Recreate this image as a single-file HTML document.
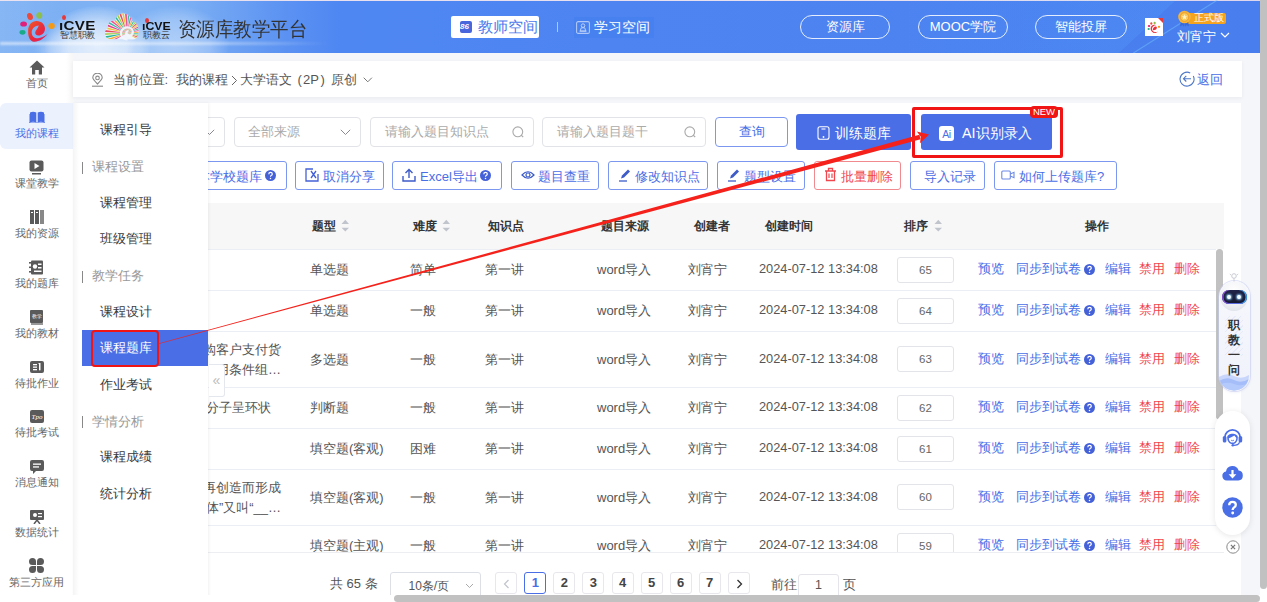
<!DOCTYPE html>
<html><head><meta charset="utf-8">
<style>
*{box-sizing:border-box;margin:0;padding:0}
html,body{width:1267px;height:602px;overflow:hidden;background:#f4f6fa;font-family:"Liberation Sans",sans-serif;color:#333}
.a{position:absolute}
.t{position:absolute;white-space:nowrap;line-height:1}
#hdr{left:0;top:0;width:1260px;height:53px;background:linear-gradient(90deg,#7aaef3 0px,#80b3f4 140px,#7aaef4 190px,#6a9ff3 240px,#5a91f2 290px,#4f87f2 340px,#4d84f2 600px,#4b82f0 1260px);overflow:hidden}
.mi{position:absolute;left:0;width:135px;height:36px;font-size:13px;color:#3a3a3a;line-height:36px;padding-left:27px}
.mg{position:absolute;left:0;width:135px;height:36px;font-size:13px;color:#999;line-height:37px;padding-left:19px}
.mg:before{content:"";position:absolute;left:9px;top:13.5px;width:1.3px;height:12px;background:#888}
.inp{position:absolute;height:30px;border:1px solid #e2e3e8;border-radius:4px;background:#fff;font-size:13px;color:#aaa;line-height:28px}
.btn{position:absolute;height:29px;border:1px solid #7b97f0;border-radius:3px;background:#fff}
.th{position:absolute;font-size:12px;font-weight:bold;color:#333;line-height:1;white-space:nowrap}
.td{position:absolute;font-size:13px;color:#555;line-height:1;white-space:nowrap}
.sinp{position:absolute;width:57px;height:26px;border:1px solid #e2e4ea;border-radius:3px;font-size:11.5px;color:#666;text-align:center;line-height:24px}
.op{position:absolute;font-size:12.85px;line-height:1;white-space:nowrap}
.bl{color:#4a6ee6}.rd{color:#f0474f}
.pg{position:absolute;top:572px;border:1px solid #dcdfe6;border-radius:3px;font-size:13px;font-weight:bold;color:#333;text-align:center}
</style></head><body>
<div id="hdr" class="a">
<div class="a" style="left:0;top:0;width:1260px;height:1px;background:#e9e0ef"></div>
<div class="a" style="left:45px;top:6px;width:105px;height:80px;border-radius:50%;background:radial-gradient(ellipse at center,rgba(255,255,255,.7) 0,rgba(255,255,255,.55) 40%,rgba(255,255,255,.2) 62%,rgba(255,255,255,0) 72%)"></div>
<div class="a" style="left:120px;top:5px;width:110px;height:80px;border-radius:50%;background:radial-gradient(ellipse at center,rgba(255,255,255,.4) 0,rgba(255,255,255,.25) 45%,rgba(255,255,255,0) 70%)"></div><div class="a" style="left:40px;top:30px;width:90px;height:40px;border-radius:50%;background:rgba(255,255,255,.25);filter:blur(4px)"></div>
<div class="a" style="left:0;top:0;width:60px;height:53px;background:linear-gradient(90deg,rgba(255,255,255,.1),rgba(255,255,255,0))"></div>
<div class="a" style="left:0;top:42px;width:330px;height:3px;background:linear-gradient(90deg,rgba(255,255,255,.55),rgba(255,255,255,.45) 60%,rgba(255,255,255,0));filter:blur(1px)"></div>
<div class="a" style="left:900px;top:0;width:360px;height:53px;background:linear-gradient(90deg,rgba(80,170,255,0),rgba(80,170,255,.12) 70%,rgba(80,170,255,.18));clip-path:polygon(0 0,276px 0,219px 53px,0 53px)"></div><div class="a" style="left:1119px;top:0;width:141px;height:53px;background:rgba(40,70,200,.06);clip-path:polygon(57.5px 0,141px 0,141px 53px,0 53px)"></div><svg class="a" style="left:1119px;top:0" width="141" height="53"><path d="M14.4 53 L98.5 0" stroke="rgba(120,200,255,.45)" stroke-width="1.2"/></svg>
<svg class="a" style="left:15px;top:8px" width="45" height="40" viewBox="0 0 45 40">
<ellipse cx="15" cy="8.5" rx="2.8" ry="3.6" fill="#ee4a3a" transform="rotate(-20 15 8.5)"/>
<ellipse cx="24.3" cy="7.5" rx="3" ry="3.2" fill="#8cc04a"/>
<ellipse cx="8.6" cy="16" rx="3.4" ry="2.6" fill="#e0207a"/>
<ellipse cx="7.5" cy="24.3" rx="3" ry="2.4" fill="#1aaa8a"/>
<ellipse cx="36.6" cy="18" rx="3.2" ry="3" fill="#f59a14"/>
<defs><linearGradient id="eg" x1="0" y1="0" x2="1" y2="1"><stop offset="0" stop-color="#f25a22"/><stop offset=".55" stop-color="#e8283f"/><stop offset="1" stop-color="#e01a6a"/></linearGradient></defs>
<path d="M32.6 26.1 C29 30.5, 24 34, 19 33.8 C15 33.5, 13 29, 13.1 23 C13.2 16.5, 17 12.9, 21.5 12.9 C26.5 12.9, 30 16.5, 30 20.5 C30 25, 26.5 27.6, 23.5 27.6 C21 27.6, 20 26, 20.2 24.5 C20.5 22, 23 20.5, 23.8 17.5 C20 17.5, 16.7 20.5, 16.7 24.5 C16.7 28.5, 19.5 30.5, 23 30.3 C26 30, 29 28.5, 32.6 26.1 Z" fill="url(#eg)"/>
</svg>
<div class="a" style="left:62px;top:15px;width:4px;height:5px;border-radius:50%;background:#e8393a"></div>
<div class="t" style="left:59px;top:19px;font-size:13.5px;font-weight:bold;color:#111;letter-spacing:.3px;transform:scaleX(1.12);transform-origin:left">ıCVE</div>
<div class="t" style="left:60px;top:31px;font-size:9px;color:#333;letter-spacing:-.2px">智慧职教</div>
<svg class="a" style="left:104px;top:13px" width="35" height="27" viewBox="0 0 35 27"><defs><clipPath id="cc"><path d="M4 26 C 0 23, 0 17, 4 15 C 3 10, 7 7, 11 8 C 12 3, 16 0.4, 19.5 0.5 C 23 0.6, 27 3.5, 28 8 C 32 9, 35 13, 34.5 18 C 35 22, 33 26.5, 29 26.5 Z"/></clipPath></defs><g clip-path="url(#cc)"><rect x="0" y="0" width="35" height="27" fill="#f0f4fb"/><path d="M23,20 L-11.6,40.0 L-13.3,36.9 Z" fill="#ee4f8a"/><path d="M23,20 L-14.1,34.9 L-15.3,31.5 Z" fill="#f7ad2e"/><path d="M23,20 L-15.9,29.5 L-16.5,26.0 Z" fill="#27b59c"/><path d="M23,20 L-16.8,23.8 L-17.0,20.3 Z" fill="#a5cd45"/><path d="M23,20 L-17.0,18.1 L-16.6,14.6 Z" fill="#ea4b5d"/><path d="M23,20 L-16.3,12.5 L-15.5,9.0 Z" fill="#f2c230"/><path d="M23,20 L-14.8,7.0 L-13.5,3.7 Z" fill="#e0408a"/><path d="M23,20 L-12.6,1.7 L-10.8,-1.3 Z" fill="#3db8a8"/><path d="M23,20 L-9.6,-3.1 L-7.5,-5.9 Z" fill="#ee4f8a"/><path d="M23,20 L-6.0,-7.5 L-3.5,-10.0 Z" fill="#f7ad2e"/><path d="M23,20 L-1.8,-11.4 L1.1,-13.4 Z" fill="#27b59c"/><path d="M23,20 L2.9,-14.6 L6.0,-16.2 Z" fill="#a5cd45"/><path d="M23,20 L8.0,-17.1 L11.3,-18.3 Z" fill="#ea4b5d"/><path d="M23,20 L13.4,-18.8 L16.9,-19.5 Z" fill="#f2c230"/><path d="M23,20 L19.1,-19.8 L22.6,-20.0 Z" fill="#e0408a"/><path d="M23,20 L24.7,-20.0 L28.3,-19.7 Z" fill="#3db8a8"/><path d="M23,20 L30.4,-19.3 L33.8,-18.5 Z" fill="#ee4f8a"/><path d="M23,20 L35.9,-17.9 L39.2,-16.6 Z" fill="#f7ad2e"/><path d="M23,20 L41.2,-15.6 L44.2,-13.9 Z" fill="#27b59c"/><path d="M23,20 L46.0,-12.7 L48.8,-10.5 Z" fill="#a5cd45"/><path d="M23,20 L50.4,-9.1 L52.9,-6.6 Z" fill="#ea4b5d"/><path d="M23,20 L54.3,-4.9 L56.4,-2.0 Z" fill="#f2c230"/><path d="M23,20 L57.5,-0.2 L59.2,2.9 Z" fill="#e0408a"/><path d="M23,20 L60.0,4.9 L61.2,8.2 Z" fill="#3db8a8"/><path d="M23,20 L61.8,10.3 L62.5,13.8 Z" fill="#ee4f8a"/><path d="M23,20 L62.8,15.9 L63.0,19.5 Z" fill="#f7ad2e"/><path d="M23,20 L63.0,21.6 L62.7,25.1 Z" fill="#27b59c"/><path d="M23,20 L62.3,27.3 L61.5,30.7 Z" fill="#a5cd45"/><path d="M23,20 L60.9,32.8 L59.6,36.1 Z" fill="#ea4b5d"/><path d="M23,20 L58.7,38.1 L57.0,41.1 Z" fill="#f2c230"/></g></svg>
<svg class="a" style="left:118px;top:25px" width="20" height="16" viewBox="0 0 20 16"><path d="M9.5 14.5 C5 14.5, 2.5 11, 3 7.5 C3.5 4, 7 2, 10.5 2.5 C14 3, 15.5 6, 14.5 8.5 C13.5 11, 10 11.5, 8.5 9.5 C7.5 8, 8.5 6, 10.5 6.2" stroke="rgba(240,246,255,.95)" stroke-width="2.2" fill="none"/></svg>
<div class="a" style="left:145px;top:18px;width:4px;height:5px;border-radius:50%;background:#e8393a"></div>
<div class="t" style="left:142px;top:21px;font-size:11px;font-weight:bold;color:#111;transform:scaleX(1.12);transform-origin:left">ıCVE</div>
<div class="t" style="left:143px;top:31px;font-size:9px;color:#333">职教云</div>
<div class="t" style="left:177.5px;top:19.5px;font-size:18.2px;letter-spacing:.5px;color:#333;transform:scaleY(1.08);transform-origin:top">资源库教学平台</div>
<div class="a" style="left:451px;top:16px;width:88px;height:22px;background:#fff;border-radius:2px"></div>
<div class="a" style="left:459.5px;top:20.8px;width:12px;height:12px;background:#4a66dc;border-radius:2px"></div>
<div class="t" style="left:460px;top:23px;font-size:8px;color:#fff;font-style:italic;font-weight:bold">86</div>
<div class="t" style="left:477.5px;top:19.5px;font-size:14.5px;color:#4b78ec">教师空间</div>
<div class="a" style="left:557px;top:22px;width:1px;height:10px;background:rgba(255,255,255,.55)"></div>
<svg class="a" style="left:576px;top:20.5px" width="14" height="13" viewBox="0 0 14 13"><rect x="0.6" y="0.6" width="12.8" height="11.8" rx="1.5" stroke="rgba(255,255,255,.9)" stroke-width="1.1" fill="none"/><circle cx="7" cy="4.6" r="1.8" stroke="#fff" stroke-width="1" fill="none"/><path d="M4.2 10 L5.3 6.8 H8.7 L9.8 10 Z" stroke="#fff" stroke-width="1" fill="none"/><path d="M3.5 10.2 H10.5" stroke="#fff" stroke-width="1"/></svg>
<div class="a" style="left:574px;top:17px;width:80px;height:21px;background:rgba(60,120,235,.35)"></div><div class="t" style="left:593.5px;top:19.5px;font-size:14.2px;color:#fff;font-weight:500">学习空间</div>
<div class="a" style="left:800px;top:15px;width:90px;height:24px;border:1px solid rgba(255,255,255,.85);border-radius:12px;color:#fff;font-size:13px;text-align:center;line-height:22px">资源库</div>
<div class="a" style="left:918px;top:15px;width:90px;height:24px;border:1px solid rgba(255,255,255,.85);border-radius:12px;color:#fff;font-size:13px;text-align:center;line-height:22px">MOOC学院</div>
<div class="a" style="left:1035px;top:15px;width:92px;height:24px;border:1px solid rgba(255,255,255,.85);border-radius:12px;color:#fff;font-size:13px;text-align:center;line-height:22px">智能投屏</div>
<div class="a" style="left:1145px;top:18px;width:18px;height:18px;background:#fff"></div>
<div class="a" style="left:1158px;top:18px;width:5px;height:5px;background:#e8393a;clip-path:polygon(0 0,100% 0,100% 100%)"></div>
<svg class="a" style="left:1146px;top:20px" width="16" height="15" viewBox="0 0 45 40"><ellipse cx="15" cy="8.5" rx="3" ry="3.6" fill="#ee4a3a"/><ellipse cx="24.3" cy="7.5" rx="3.2" ry="3.4" fill="#8cc04a"/><ellipse cx="8.6" cy="16" rx="3.6" ry="2.8" fill="#e0207a"/><ellipse cx="7.5" cy="24.3" rx="3.2" ry="2.6" fill="#1aaa8a"/><ellipse cx="36.6" cy="18" rx="3.4" ry="3.2" fill="#f59a14"/><path d="M28 13.5 C22 10.5, 13 14, 13 23 C13 31, 20 36, 26 35.5 C29 35.3, 31 34, 33.5 31.5 C30 33, 27 33.2, 24 32.5 C19 31, 16.5 27, 17 22.5 C17.5 17, 22 14, 28 13.5 Z" fill="#e8303c"/><path d="M19 27.5 C19.5 20, 25 16, 28.5 17.5 C32 19, 31 24.5, 27 26 C24.5 27, 22 27, 19 27.5 Z" fill="#e8303c"/></svg>
<div class="a" style="left:1187px;top:12.5px;width:39px;height:11px;background:#f6a31e;border-radius:0 2px 2px 0"></div>
<svg class="a" style="left:1177px;top:10px" width="15" height="17" viewBox="0 0 15 17"><path d="M4 11 L3 16.5 L5.5 15 L7 16.8 L7.5 12 Z M11 11 L12 16.5 L9.5 15 L8 16.8 L7.5 12 Z" fill="#3a6ad8"/><circle cx="7.5" cy="7" r="6.3" fill="#f7b53a"/><circle cx="7.5" cy="7" r="4.3" fill="#f9c95a" stroke="#e9952a" stroke-width=".8"/><path d="M7.5 4.3 L8.3 6.3 L10.3 6.4 L8.8 7.6 L9.3 9.6 L7.5 8.5 L5.7 9.6 L6.2 7.6 L4.7 6.4 L6.7 6.3 Z" fill="#fff3c8"/></svg>
<div class="t" style="left:1193.5px;top:13px;font-size:10px;color:#fff">正式版</div>
<div class="t" style="left:1176.5px;top:29.5px;font-size:13px;color:#fff">刘宵宁</div>
<svg class="a" style="left:1220px;top:32px" width="10" height="7"><path d="M1 1 L5 5 L9 1" stroke="#fff" stroke-width="1.2" fill="none"/></svg>
</div>
<div class="a" style="left:0;top:53px;width:73px;height:549px;background:#fff"></div>
<div class="a" style="left:0;top:103px;width:73px;height:46px;background:#ebf1fd;border-radius:6px 0 0 6px"></div>
<svg class="a" style="left:29px;top:60px" width="16" height="15" viewBox="0 0 16 15"><path d="M8 0.5 L15.5 7.5 L13 7.5 L13 14.5 L9.8 14.5 L9.8 10 L6.2 10 L6.2 14.5 L3 14.5 L3 7.5 L0.5 7.5 Z" fill="#5a5a5a"/></svg>
<div class="t" style="left:0;width:73px;text-align:center;top:78.4px;font-size:11px;color:#666">首页</div>
<svg class="a" style="left:29px;top:111px" width="16" height="12" viewBox="0 0 16 12"><path d="M1 1.5 Q4 0 7.3 1.5 L7.3 11.5 Q4 10 1 11.5 Z M8.7 1.5 Q12 0 15 1.5 L15 11.5 Q12 10 8.7 11.5 Z" fill="#4a6ee6"/><path d="M0 3 L0 12 L16 12 L16 3" stroke="#4a6ee6" stroke-width="1" fill="none"/></svg>
<div class="t" style="left:0;width:73px;text-align:center;top:128.2px;font-size:11px;color:#4a6ee6">我的课程</div>
<svg class="a" style="left:29px;top:160px" width="15" height="15" viewBox="0 0 15 15"><rect x="0.5" y="0.5" width="14" height="11" rx="2" fill="#5a5a5a"/><path d="M5.5 3 L10.5 6 L5.5 9 Z" fill="#fff"/><rect x="3" y="13" width="9" height="1.5" fill="#5a5a5a"/></svg>
<div class="t" style="left:0;width:73px;text-align:center;top:178.1px;font-size:11px;color:#666">课堂教学</div>
<svg class="a" style="left:30px;top:210px" width="14" height="14" viewBox="0 0 14 14"><rect x="0" y="0" width="4" height="14" fill="#5a5a5a"/><rect x="5" y="0" width="4" height="14" fill="#5a5a5a"/><rect x="10" y="0" width="4" height="14" fill="#888"/><rect x="1" y="2" width="2" height="1" fill="#fff"/><rect x="6" y="2" width="2" height="1" fill="#fff"/></svg>
<div class="t" style="left:0;width:73px;text-align:center;top:228.0px;font-size:11px;color:#666">我的资源</div>
<svg class="a" style="left:29px;top:260px" width="15" height="15" viewBox="0 0 15 15"><rect x="2" y="0.5" width="12" height="14" rx="1" fill="#5a5a5a"/><rect x="0" y="2" width="4" height="1.6" fill="#5a5a5a"/><rect x="0" y="6.5" width="4" height="1.6" fill="#5a5a5a"/><rect x="0" y="11" width="4" height="1.6" fill="#5a5a5a"/><circle cx="6" cy="6.5" r="2.2" fill="#fff"/><rect x="9" y="3.5" width="3.5" height="1.5" fill="#fff"/><rect x="9" y="7" width="3.5" height="1.5" fill="#fff"/><rect x="5" y="10.5" width="7.5" height="1.5" fill="#fff"/></svg>
<div class="t" style="left:0;width:73px;text-align:center;top:277.8px;font-size:11px;color:#666">我的题库</div>
<svg class="a" style="left:30px;top:310px" width="14" height="15" viewBox="0 0 14 15"><rect x="0" y="0" width="13" height="13" rx="1" fill="#5a5a5a"/><rect x="1" y="13" width="12" height="2" fill="#999"/><text x="6.5" y="7.5" font-size="5" fill="#fff" text-anchor="middle" font-family="Liberation Sans">教学</text></svg>
<div class="t" style="left:0;width:73px;text-align:center;top:327.6px;font-size:11px;color:#666">我的教材</div>
<svg class="a" style="left:30px;top:361px" width="14" height="12" viewBox="0 0 14 12"><rect x="0" y="0" width="14" height="12" rx="2" fill="#5a5a5a"/><rect x="3" y="3" width="4" height="1.3" fill="#fff"/><rect x="3" y="5.5" width="4" height="1.3" fill="#fff"/><rect x="3" y="8" width="4" height="1.3" fill="#fff"/><rect x="9" y="3" width="1.5" height="6.3" fill="#fff"/><rect x="8.5" y="2" width="2" height="1" fill="#fff"/></svg>
<div class="t" style="left:0;width:73px;text-align:center;top:377.5px;font-size:11px;color:#666">待批作业</div>
<svg class="a" style="left:30px;top:410px" width="14" height="13" viewBox="0 0 14 13"><rect x="0" y="0" width="14" height="13" rx="2" fill="#5a5a5a"/><text x="7" y="9" font-size="7" fill="#fff" text-anchor="middle" font-style="italic" font-family="Liberation Serif">Tpo</text></svg>
<div class="t" style="left:0;width:73px;text-align:center;top:427.4px;font-size:11px;color:#666">待批考试</div>
<svg class="a" style="left:30px;top:460px" width="14" height="14" viewBox="0 0 14 14"><path d="M2 0 H12 Q14 0 14 2 V9 Q14 11 12 11 H6 L3 14 L3 11 H2 Q0 11 0 9 V2 Q0 0 2 0 Z" fill="#5a5a5a"/><rect x="3" y="3.5" width="8" height="1.3" fill="#fff"/><rect x="3" y="6.3" width="6" height="1.3" fill="#fff"/></svg>
<div class="t" style="left:0;width:73px;text-align:center;top:477.2px;font-size:11px;color:#666">消息通知</div>
<svg class="a" style="left:30px;top:510px" width="14" height="14" viewBox="0 0 14 14"><rect x="0" y="0" width="14" height="10" rx="1" fill="#5a5a5a"/><circle cx="5" cy="5" r="2" fill="#fff"/><rect x="8" y="3" width="4" height="1.2" fill="#fff"/><rect x="8" y="6" width="4" height="1.2" fill="#fff"/><path d="M4 14 L7 10 L10 14" stroke="#5a5a5a" stroke-width="1.5" fill="none"/></svg>
<div class="t" style="left:0;width:73px;text-align:center;top:527.1px;font-size:11px;color:#666">数据统计</div>
<svg class="a" style="left:29px;top:558px" width="15" height="15" viewBox="0 0 15 15"><path d="M7 7 H3.5 A3.5 3.5 0 1 1 7 3.5 Z M8 7 V3.5 A3.5 3.5 0 1 1 11.5 7 Z M7 8 V11.5 A3.5 3.5 0 1 1 3.5 8 Z M8 8 H11.5 A3.5 3.5 0 1 1 8 11.5 Z" fill="#5a5a5a"/></svg>
<div class="t" style="left:0;width:73px;text-align:center;top:576.9px;font-size:11px;color:#666">第三方应用</div>
<div class="a" style="left:73px;top:61px;width:1169px;height:36px;background:#fff;box-shadow:0 1px 4px rgba(0,0,20,.05)"></div>
<svg class="a" style="left:91px;top:73px" width="13" height="14" viewBox="0 0 13 14"><path d="M6.5 11 C3.5 8, 1.8 6.2, 1.8 4.8 A4.7 4.7 0 0 1 11.2 4.8 C11.2 6.2, 9.5 8, 6.5 11 Z" stroke="#888" stroke-width="1.1" fill="none"/><circle cx="6.5" cy="4.9" r="1.8" stroke="#888" stroke-width="1.1" fill="none"/><path d="M1 13.2 H12" stroke="#888" stroke-width="1.1"/></svg>
<div class="t" style="left:112.5px;top:73px;font-size:13px;color:#555">当前位置</div>
<div class="t" style="left:164.5px;top:73px;font-size:13px;color:#555">:</div>
<div class="t" style="left:175.7px;top:73px;font-size:13px;color:#555">我的课程</div>
<svg class="a" style="left:230.5px;top:74.5px" width="7" height="11"><path d="M1 1 L5.5 5.5 L1 10" stroke="#666" stroke-width="1" fill="none"/></svg>
<div class="t" style="left:239.7px;top:73px;font-size:13px;color:#555">大学语文</div>
<div class="t" style="left:297.5px;top:73px;font-size:13px;color:#555">(</div>
<div class="t" style="left:303px;top:73px;font-size:13px;color:#555">2P</div>
<div class="t" style="left:320.5px;top:73px;font-size:13px;color:#555">)</div>
<div class="t" style="left:331.4px;top:73px;font-size:13px;color:#555">原创</div>
<svg class="a" style="left:363px;top:76.5px" width="10" height="6"><path d="M0.7 0.7 L4.8 4.8 L8.9 0.7" stroke="#777" stroke-width="1" fill="none"/></svg>
<svg class="a" style="left:1178.5px;top:70.5px" width="16" height="16" viewBox="0 0 16 16"><path d="M11.2 1.9 A7 7 0 1 0 14.3 5" stroke="#4d78c8" stroke-width="1.1" fill="none"/><path d="M12 7.7 H4.5 M7.3 4.9 L4.5 7.7 L7.3 10.5" stroke="#4d78c8" stroke-width="1.1" fill="none"/></svg>
<div class="t" style="left:1197px;top:73px;font-size:13px;color:#4a6ee6">返回</div>
<div class="a" style="left:73px;top:103px;width:1168px;height:499px;background:#fff"></div>
<div class="inp" style="left:150px;top:117px;width:75px"></div>
<svg class="a" style="left:204px;top:128.5px" width="11" height="7"><path d="M0.8 0.8 L5.5 5.5 L10.2 0.8" stroke="#8a8a92" stroke-width="1" fill="none"/></svg>
<div class="inp" style="left:234px;top:117px;width:127px;padding-left:13px;color:#aaa">全部来源</div>
<svg class="a" style="left:340px;top:128.5px" width="11" height="7"><path d="M0.8 0.8 L5.5 5.5 L10.2 0.8" stroke="#8a8a92" stroke-width="1" fill="none"/></svg>
<div class="inp" style="left:370px;top:117px;width:164px;padding-left:14px;color:#aaa">请输入题目知识点</div>
<svg class="a" style="left:511.5px;top:125.5px" width="13" height="13" viewBox="0 0 13 13"><circle cx="5.8" cy="5.8" r="4.9" stroke="#aaa" stroke-width="1.1" fill="none"/><path d="M9.2 9.2 L11.2 11.2" stroke="#aaa" stroke-width="1.2"/></svg>
<div class="inp" style="left:542px;top:117px;width:164px;padding-left:14px;color:#aaa">请输入题目题干</div>
<svg class="a" style="left:683.5px;top:125.5px" width="13" height="13" viewBox="0 0 13 13"><circle cx="5.8" cy="5.8" r="4.9" stroke="#aaa" stroke-width="1.1" fill="none"/><path d="M9.2 9.2 L11.2 11.2" stroke="#aaa" stroke-width="1.2"/></svg>
<div class="btn" style="left:715px;top:117px;width:73px;height:30px;border-radius:4px"></div>
<div class="t" style="left:739px;top:125px;font-size:13px;color:#4a6ee6">查询</div>
<div class="a" style="left:796px;top:114px;width:115px;height:36px;background:#4a6ee6;border-radius:3px"></div>
<svg class="a" style="left:816.5px;top:125.5px" width="13" height="14" viewBox="0 0 13 14"><rect x="1" y="0.8" width="11" height="12.4" rx="2" stroke="#fff" stroke-width="1.1" fill="none"/><path d="M4.5 3 H8.5" stroke="#fff" stroke-width="1.1"/><circle cx="6.5" cy="11" r=".9" fill="#fff"/></svg>
<div class="t" style="left:835px;top:126px;font-size:14.4px;color:#fff">训练题库</div>
<div class="a" style="left:921px;top:114px;width:131px;height:36px;background:#4a6ee6;border-radius:3px"></div>
<div class="a" style="left:939px;top:126px;width:15px;height:15px;background:#fff;border-radius:3px;color:#4a6ee6;font-size:10.5px;line-height:16px;text-align:center;letter-spacing:-.3px">Ai</div>
<div class="t" style="left:962px;top:126px;font-size:14.3px;color:#fff">AI识别录入</div>
<div class="a" style="left:912px;top:107px;width:151px;height:51px;border:3px solid #f01414;border-radius:2px"></div>
<div class="a" style="left:1030px;top:106px;width:28px;height:12px;background:#f01414;border-radius:4px;color:#fff;font-size:9.5px;line-height:12px;text-align:center">NEW</div>
<div class="btn" style="left:150px;top:161px;width:137px;"></div>
<div class="btn" style="left:295px;top:161px;width:89px;"></div>
<div class="btn" style="left:392px;top:161px;width:110px;"></div>
<div class="btn" style="left:511px;top:161px;width:88px;"></div>
<div class="btn" style="left:608px;top:161px;width:100px;"></div>
<div class="btn" style="left:717px;top:161px;width:88px;"></div>
<div class="btn" style="left:814px;top:161px;width:87px;border-color:#f08a8f;"></div>
<div class="btn" style="left:910px;top:161px;width:75px;"></div>
<div class="btn" style="left:994px;top:161px;width:123px;"></div>
<div class="t" style="left:196.5px;top:169.5px;font-size:13px;color:#4a6ee6">本学校题库</div>
<svg class="a" style="left:264.5px;top:170px" width="11" height="11" viewBox="0 0 11 11"><circle cx="5.5" cy="5.5" r="5.5" fill="#4561d8"/><path d="M3.8 4.2 Q3.8 2.4 5.5 2.4 Q7.3 2.4 7.3 4 Q7.3 5 6.2 5.5 Q5.5 5.9 5.5 6.8" stroke="#fff" stroke-width="1.2" fill="none"/><circle cx="5.5" cy="8.4" r=".75" fill="#fff"/></svg>
<svg class="a" style="left:305px;top:168px" width="14" height="14" viewBox="0 0 14 14"><path d="M8 1 H1 V13 H13 V6" stroke="#4561d8" stroke-width="1.3" fill="none"/><path d="M6 3 L11 10 M11 3 L6 10" stroke="#4561d8" stroke-width="1.3"/></svg>
<div class="t" style="left:323px;top:169.5px;font-size:13px;color:#4a6ee6">取消分享</div>
<svg class="a" style="left:402px;top:168px" width="14" height="14" viewBox="0 0 14 14"><path d="M7 10 V1.5 M3.5 5 L7 1.5 L10.5 5" stroke="#3d5bc9" stroke-width="1.4" fill="none"/><path d="M1 8 V13 H13 V8" stroke="#3d5bc9" stroke-width="1.4" fill="none"/></svg>
<div class="t" style="left:420px;top:169.5px;font-size:13px;color:#4a6ee6">Excel导出</div>
<svg class="a" style="left:480px;top:170px" width="11" height="11" viewBox="0 0 11 11"><circle cx="5.5" cy="5.5" r="5.5" fill="#4561d8"/><path d="M3.8 4.2 Q3.8 2.4 5.5 2.4 Q7.3 2.4 7.3 4 Q7.3 5 6.2 5.5 Q5.5 5.9 5.5 6.8" stroke="#fff" stroke-width="1.2" fill="none"/><circle cx="5.5" cy="8.4" r=".75" fill="#fff"/></svg>
<svg class="a" style="left:521px;top:170px" width="14" height="10" viewBox="0 0 14 10"><path d="M1 5 Q7 -1.5 13 5 Q7 11.5 1 5 Z" stroke="#3d5bc9" stroke-width="1.2" fill="none"/><circle cx="7" cy="5" r="2" stroke="#3d5bc9" stroke-width="1.2" fill="none"/></svg>
<div class="t" style="left:538px;top:169.5px;font-size:13px;color:#4a6ee6">题目查重</div>
<svg class="a" style="left:617.5px;top:168px" width="13" height="14" viewBox="0 0 13 14"><path d="M3 10.5 L4 7.5 L10 1.5 L12 3.5 L6 9.5 Z" fill="#3d5bc9"/><path d="M1 13 H9" stroke="#3d5bc9" stroke-width="1.3"/></svg>
<div class="t" style="left:635px;top:169.5px;font-size:13px;color:#4a6ee6">修改知识点</div>
<svg class="a" style="left:726.5px;top:168px" width="13" height="14" viewBox="0 0 13 14"><path d="M3 10.5 L4 7.5 L10 1.5 L12 3.5 L6 9.5 Z" fill="#3d5bc9"/><path d="M1 13 H9" stroke="#3d5bc9" stroke-width="1.3"/></svg>
<div class="t" style="left:744px;top:169.5px;font-size:13px;color:#4a6ee6">题型设置</div>
<svg class="a" style="left:824px;top:167px" width="13" height="15" viewBox="0 0 13 15"><path d="M1 4 H12 M4.5 4 V1.5 H8.5 V4" stroke="#f0474f" stroke-width="1.3" fill="none"/><path d="M2.5 4 V13.5 H10.5 V4" stroke="#f0474f" stroke-width="1.3" fill="none"/><path d="M5 6.5 V11 M8 6.5 V11" stroke="#f0474f" stroke-width="1.2"/></svg>
<div class="t" style="left:840.5px;top:169.5px;font-size:13px;color:#f0474f">批量删除</div>
<div class="t" style="left:924px;top:169.5px;font-size:13px;color:#4a6ee6">导入记录</div>
<svg class="a" style="left:1001px;top:170px" width="14" height="10" viewBox="0 0 14 10"><rect x="0.8" y="1" width="8.5" height="8" rx="1" stroke="#6d8ae8" stroke-width="1.1" fill="none"/><path d="M9.3 4 L13 2.3 V7.7 L9.3 6" stroke="#6d8ae8" stroke-width="1.1" fill="none"/></svg>
<div class="t" style="left:1019px;top:169.5px;font-size:13px;color:#4a6ee6">如何上传题库?</div>
<div class="a" style="left:150px;top:203px;width:1074px;height:46px;background:#f7f7f8"></div>
<div class="a" style="left:150px;top:249px;width:1074px;height:1px;background:#ebeef5"></div>
<div class="th" style="left:312px;top:220px">题型</div>
<svg class="a" style="left:341px;top:219px" width="9" height="13" viewBox="0 0 9 13"><path d="M0.5 5 L4.3 0.8 L8 5 Z" fill="#c0c4cc"/><path d="M0.5 8.7 L4.3 12.6 L8 8.7 Z" fill="#c0c4cc"/></svg>
<div class="th" style="left:413px;top:220px">难度</div>
<svg class="a" style="left:442px;top:219px" width="9" height="13" viewBox="0 0 9 13"><path d="M0.5 5 L4.3 0.8 L8 5 Z" fill="#c0c4cc"/><path d="M0.5 8.7 L4.3 12.6 L8 8.7 Z" fill="#c0c4cc"/></svg>
<div class="th" style="left:488px;top:220px">知识点</div>
<div class="th" style="left:601px;top:220px">题目来源</div>
<div class="th" style="left:694px;top:220px">创建者</div>
<div class="th" style="left:765px;top:220px">创建时间</div>
<div class="th" style="left:904px;top:220px">排序</div>
<svg class="a" style="left:933.5px;top:219px" width="9" height="13" viewBox="0 0 9 13"><path d="M0.5 5 L4.3 0.8 L8 5 Z" fill="#c0c4cc"/><path d="M0.5 8.7 L4.3 12.6 L8 8.7 Z" fill="#c0c4cc"/></svg>
<div class="th" style="left:1085px;top:220px">操作</div>
<div class="a" style="left:150px;top:249px;width:1074px;height:303px;overflow:hidden">
<div class="a" style="left:0;top:41px;width:1066px;height:1px;background:#ebeef5"></div>
<div class="td" style="left:160px;top:14.0px;color:#555">单选题</div>
<div class="td" style="left:260px;top:14.0px;color:#555">简单</div>
<div class="td" style="left:335px;top:14.0px;color:#555">第一讲</div>
<div class="td" style="left:447px;top:14.0px;color:#555">word导入</div>
<div class="td" style="left:538px;top:14.0px;color:#555">刘宵宁</div>
<div class="td" style="left:609px;top:14.0px;font-size:12.8px">2024-07-12 13:34:08</div>
<div class="sinp" style="left:747px;top:7.5px">65</div>
<div class="op bl" style="left:828px;top:14.0px">预览</div>
<div class="op bl" style="left:866px;top:14.0px">同步到试卷</div>
<svg class="a" style="left:934px;top:15.0px" width="11" height="11" viewBox="0 0 11 11"><circle cx="5.5" cy="5.5" r="5.5" fill="#4561d8"/><path d="M3.8 4.2 Q3.8 2.4 5.5 2.4 Q7.3 2.4 7.3 4 Q7.3 5 6.2 5.5 Q5.5 5.9 5.5 6.8" stroke="#fff" stroke-width="1.2" fill="none"/><circle cx="5.5" cy="8.4" r=".75" fill="#fff"/></svg>
<div class="op bl" style="left:955px;top:14.0px">编辑</div>
<div class="op rd" style="left:989px;top:14.0px">禁用</div>
<div class="op rd" style="left:1024px;top:14.0px">删除</div>
<div class="a" style="left:0;top:82px;width:1066px;height:1px;background:#ebeef5"></div>
<div class="td" style="left:160px;top:55.0px;color:#555">单选题</div>
<div class="td" style="left:260px;top:55.0px;color:#555">一般</div>
<div class="td" style="left:335px;top:55.0px;color:#555">第一讲</div>
<div class="td" style="left:447px;top:55.0px;color:#555">word导入</div>
<div class="td" style="left:538px;top:55.0px;color:#555">刘宵宁</div>
<div class="td" style="left:609px;top:55.0px;font-size:12.8px">2024-07-12 13:34:08</div>
<div class="sinp" style="left:747px;top:48.5px">64</div>
<div class="op bl" style="left:828px;top:55.0px">预览</div>
<div class="op bl" style="left:866px;top:55.0px">同步到试卷</div>
<svg class="a" style="left:934px;top:56.0px" width="11" height="11" viewBox="0 0 11 11"><circle cx="5.5" cy="5.5" r="5.5" fill="#4561d8"/><path d="M3.8 4.2 Q3.8 2.4 5.5 2.4 Q7.3 2.4 7.3 4 Q7.3 5 6.2 5.5 Q5.5 5.9 5.5 6.8" stroke="#fff" stroke-width="1.2" fill="none"/><circle cx="5.5" cy="8.4" r=".75" fill="#fff"/></svg>
<div class="op bl" style="left:955px;top:55.0px">编辑</div>
<div class="op rd" style="left:989px;top:55.0px">禁用</div>
<div class="op rd" style="left:1024px;top:55.0px">删除</div>
<div class="a" style="left:0;top:138px;width:1066px;height:1px;background:#ebeef5"></div>
<div class="td" style="left:131px;top:93.5px;transform:translateX(-100%)">购客户支付货</div>
<div class="td" style="left:131px;top:113.5px;transform:translateX(-100%)">用条件组…</div>
<div class="td" style="left:160px;top:103.5px;color:#555">多选题</div>
<div class="td" style="left:260px;top:103.5px;color:#555">一般</div>
<div class="td" style="left:335px;top:103.5px;color:#555">第一讲</div>
<div class="td" style="left:447px;top:103.5px;color:#555">word导入</div>
<div class="td" style="left:538px;top:103.5px;color:#555">刘宵宁</div>
<div class="td" style="left:609px;top:103.5px;font-size:12.8px">2024-07-12 13:34:08</div>
<div class="sinp" style="left:747px;top:97.0px">63</div>
<div class="op bl" style="left:828px;top:103.5px">预览</div>
<div class="op bl" style="left:866px;top:103.5px">同步到试卷</div>
<svg class="a" style="left:934px;top:104.5px" width="11" height="11" viewBox="0 0 11 11"><circle cx="5.5" cy="5.5" r="5.5" fill="#4561d8"/><path d="M3.8 4.2 Q3.8 2.4 5.5 2.4 Q7.3 2.4 7.3 4 Q7.3 5 6.2 5.5 Q5.5 5.9 5.5 6.8" stroke="#fff" stroke-width="1.2" fill="none"/><circle cx="5.5" cy="8.4" r=".75" fill="#fff"/></svg>
<div class="op bl" style="left:955px;top:103.5px">编辑</div>
<div class="op rd" style="left:989px;top:103.5px">禁用</div>
<div class="op rd" style="left:1024px;top:103.5px">删除</div>
<div class="a" style="left:0;top:179px;width:1066px;height:1px;background:#ebeef5"></div>
<div class="td" style="left:56px;top:152.0px;color:#555">分子呈环状</div>
<div class="td" style="left:160px;top:152.0px;color:#555">判断题</div>
<div class="td" style="left:260px;top:152.0px;color:#555">一般</div>
<div class="td" style="left:335px;top:152.0px;color:#555">第一讲</div>
<div class="td" style="left:447px;top:152.0px;color:#555">word导入</div>
<div class="td" style="left:538px;top:152.0px;color:#555">刘宵宁</div>
<div class="td" style="left:609px;top:152.0px;font-size:12.8px">2024-07-12 13:34:08</div>
<div class="sinp" style="left:747px;top:145.5px">62</div>
<div class="op bl" style="left:828px;top:152.0px">预览</div>
<div class="op bl" style="left:866px;top:152.0px">同步到试卷</div>
<svg class="a" style="left:934px;top:153.0px" width="11" height="11" viewBox="0 0 11 11"><circle cx="5.5" cy="5.5" r="5.5" fill="#4561d8"/><path d="M3.8 4.2 Q3.8 2.4 5.5 2.4 Q7.3 2.4 7.3 4 Q7.3 5 6.2 5.5 Q5.5 5.9 5.5 6.8" stroke="#fff" stroke-width="1.2" fill="none"/><circle cx="5.5" cy="8.4" r=".75" fill="#fff"/></svg>
<div class="op bl" style="left:955px;top:152.0px">编辑</div>
<div class="op rd" style="left:989px;top:152.0px">禁用</div>
<div class="op rd" style="left:1024px;top:152.0px">删除</div>
<div class="a" style="left:0;top:220px;width:1066px;height:1px;background:#ebeef5"></div>
<div class="td" style="left:160px;top:193.0px;color:#555">填空题(客观)</div>
<div class="td" style="left:260px;top:193.0px;color:#555">困难</div>
<div class="td" style="left:335px;top:193.0px;color:#555">第一讲</div>
<div class="td" style="left:447px;top:193.0px;color:#555">word导入</div>
<div class="td" style="left:538px;top:193.0px;color:#555">刘宵宁</div>
<div class="td" style="left:609px;top:193.0px;font-size:12.8px">2024-07-12 13:34:08</div>
<div class="sinp" style="left:747px;top:186.5px">61</div>
<div class="op bl" style="left:828px;top:193.0px">预览</div>
<div class="op bl" style="left:866px;top:193.0px">同步到试卷</div>
<svg class="a" style="left:934px;top:194.0px" width="11" height="11" viewBox="0 0 11 11"><circle cx="5.5" cy="5.5" r="5.5" fill="#4561d8"/><path d="M3.8 4.2 Q3.8 2.4 5.5 2.4 Q7.3 2.4 7.3 4 Q7.3 5 6.2 5.5 Q5.5 5.9 5.5 6.8" stroke="#fff" stroke-width="1.2" fill="none"/><circle cx="5.5" cy="8.4" r=".75" fill="#fff"/></svg>
<div class="op bl" style="left:955px;top:193.0px">编辑</div>
<div class="op rd" style="left:989px;top:193.0px">禁用</div>
<div class="op rd" style="left:1024px;top:193.0px">删除</div>
<div class="a" style="left:0;top:276px;width:1066px;height:1px;background:#ebeef5"></div>
<div class="td" style="left:131px;top:231.5px;transform:translateX(-100%)">再创造而形成</div>
<div class="td" style="left:131px;top:251.5px;transform:translateX(-100%)">体”又叫“__…</div>
<div class="td" style="left:160px;top:241.5px;color:#555">填空题(客观)</div>
<div class="td" style="left:260px;top:241.5px;color:#555">一般</div>
<div class="td" style="left:335px;top:241.5px;color:#555">第一讲</div>
<div class="td" style="left:447px;top:241.5px;color:#555">word导入</div>
<div class="td" style="left:538px;top:241.5px;color:#555">刘宵宁</div>
<div class="td" style="left:609px;top:241.5px;font-size:12.8px">2024-07-12 13:34:08</div>
<div class="sinp" style="left:747px;top:235.0px">60</div>
<div class="op bl" style="left:828px;top:241.5px">预览</div>
<div class="op bl" style="left:866px;top:241.5px">同步到试卷</div>
<svg class="a" style="left:934px;top:242.5px" width="11" height="11" viewBox="0 0 11 11"><circle cx="5.5" cy="5.5" r="5.5" fill="#4561d8"/><path d="M3.8 4.2 Q3.8 2.4 5.5 2.4 Q7.3 2.4 7.3 4 Q7.3 5 6.2 5.5 Q5.5 5.9 5.5 6.8" stroke="#fff" stroke-width="1.2" fill="none"/><circle cx="5.5" cy="8.4" r=".75" fill="#fff"/></svg>
<div class="op bl" style="left:955px;top:241.5px">编辑</div>
<div class="op rd" style="left:989px;top:241.5px">禁用</div>
<div class="op rd" style="left:1024px;top:241.5px">删除</div>
<div class="a" style="left:0;top:317px;width:1066px;height:1px;background:#ebeef5"></div>
<div class="td" style="left:160px;top:290.0px;color:#555">填空题(主观)</div>
<div class="td" style="left:260px;top:290.0px;color:#555">一般</div>
<div class="td" style="left:335px;top:290.0px;color:#555">第一讲</div>
<div class="td" style="left:447px;top:290.0px;color:#555">word导入</div>
<div class="td" style="left:538px;top:290.0px;color:#555">刘宵宁</div>
<div class="td" style="left:609px;top:290.0px;font-size:12.8px">2024-07-12 13:34:08</div>
<div class="sinp" style="left:747px;top:283.5px">59</div>
<div class="op bl" style="left:828px;top:290.0px">预览</div>
<div class="op bl" style="left:866px;top:290.0px">同步到试卷</div>
<svg class="a" style="left:934px;top:291.0px" width="11" height="11" viewBox="0 0 11 11"><circle cx="5.5" cy="5.5" r="5.5" fill="#4561d8"/><path d="M3.8 4.2 Q3.8 2.4 5.5 2.4 Q7.3 2.4 7.3 4 Q7.3 5 6.2 5.5 Q5.5 5.9 5.5 6.8" stroke="#fff" stroke-width="1.2" fill="none"/><circle cx="5.5" cy="8.4" r=".75" fill="#fff"/></svg>
<div class="op bl" style="left:955px;top:290.0px">编辑</div>
<div class="op rd" style="left:989px;top:290.0px">禁用</div>
<div class="op rd" style="left:1024px;top:290.0px">删除</div>
<div class="a" style="left:1066px;top:0;width:8px;height:303px;background:#fff"></div>
<div class="a" style="left:1066px;top:0;width:7px;height:170px;background:#c1c1c1;border-radius:4px 4px 3px 3px"></div>
</div>
<div class="a" style="left:150px;top:552px;width:1074px;height:1px;background:#eceef2"></div>
<div class="t" style="left:330px;top:577px;font-size:13px;color:#555">共 65 条</div>
<div class="a" style="left:390px;top:572px;width:91px;height:30px;border:1px solid #dcdfe6;border-radius:3px"></div>
<div class="t" style="left:408.5px;top:579.5px;font-size:12px;color:#555">10条/页</div>
<svg class="a" style="left:465px;top:583px" width="9" height="6"><path d="M1 1 L4.5 4.5 L8 1" stroke="#aaa" stroke-width="1" fill="none"/></svg>
<div class="pg" style="left:495.2px;width:22px;height:22px;border-color:#e8e8ec"></div><svg class="a" style="left:502.7px;top:579px" width="7" height="10"><path d="M5.5 1 L1.5 5 L5.5 9" stroke="#c0c4cc" stroke-width="1.2" fill="none"/></svg>
<div class="pg" style="left:524.3px;width:22px;height:22px;line-height:20px;border-color:#4a6ee6;color:#4a6ee6">1</div>
<div class="pg" style="left:553.3px;width:22px;height:22px;line-height:20px;border-color:#e8e8ec;color:#444">2</div>
<div class="pg" style="left:582.4px;width:22px;height:22px;line-height:20px;border-color:#e8e8ec;color:#444">3</div>
<div class="pg" style="left:611.5px;width:22px;height:22px;line-height:20px;border-color:#e8e8ec;color:#444">4</div>
<div class="pg" style="left:640.5px;width:22px;height:22px;line-height:20px;border-color:#e8e8ec;color:#444">5</div>
<div class="pg" style="left:669.6px;width:22px;height:22px;line-height:20px;border-color:#e8e8ec;color:#444">6</div>
<div class="pg" style="left:698.7px;width:22px;height:22px;line-height:20px;border-color:#e8e8ec;color:#444">7</div>
<div class="pg" style="left:727.8px;width:22px;height:22px;border-color:#e8e8ec"></div><svg class="a" style="left:735.8px;top:579px" width="7" height="10"><path d="M1.5 1 L5.5 5 L1.5 9" stroke="#333" stroke-width="1.3" fill="none"/></svg>
<div class="t" style="left:770.8px;top:578.5px;font-size:12.5px;color:#555">前往</div>
<div class="a" style="left:798px;top:574px;width:41px;height:28px;border:1px solid #e4e4ea;border-radius:3px;font-size:12.5px;color:#555;text-align:center;line-height:21px">1</div>
<div class="t" style="left:843px;top:578.5px;font-size:12.5px;color:#555">页</div>
<div class="a" style="left:73px;top:103px;width:135px;height:499px;background:#fff;box-shadow:1px 0 3px rgba(0,0,0,.06)">
<div class="mi" style="top:9.0px">课程引导</div>
<div class="mg" style="top:45.3px">课程设置</div>
<div class="mi" style="top:81.7px">课程管理</div>
<div class="mi" style="top:118.1px">班级管理</div>
<div class="mg" style="top:154.4px">教学任务</div>
<div class="mi" style="top:190.8px">课程设计</div>
<div class="mi" style="top:227.1px;left:9px;width:126px;background:#4a6ee6;color:#fff;padding-left:18px">课程题库</div>
<div class="mi" style="top:263.5px">作业考试</div>
<div class="mg" style="top:299.8px">学情分析</div>
<div class="mi" style="top:336.2px">课程成绩</div>
<div class="mi" style="top:372.5px">统计分析</div>
</div>
<div class="a" style="left:73px;top:103px;width:6px;height:492px;background:linear-gradient(90deg,rgba(0,0,30,.045),rgba(0,0,30,0))"></div>
<div class="a" style="left:66px;top:53px;width:7px;height:50px;background:linear-gradient(90deg,rgba(0,0,30,0),rgba(0,0,30,.035))"></div>
<div class="a" style="left:91px;top:330px;width:68px;height:37px;border:2.5px solid #f01414;border-radius:4px"></div>
<div class="a" style="left:209px;top:364px;width:16px;height:33px;background:#fff;border:1px solid #e4e7ed;border-left:none;border-radius:0 3px 3px 0;color:#bbb;font-size:14px;line-height:31px;text-align:center">«</div>
<svg class="a" style="left:0;top:0" width="1267" height="602"><polygon points="158.6,343.9 920.6,139.3 919.4,134.7 158.4,343.5" fill="#f5211a"/><polygon points="929,134.5 920.0,143.2 920.8,136.7 916.8,131.6" fill="#f5211a"/></svg>
<div class="a" style="left:1218.5px;top:281px;width:31px;height:110px;border-radius:15.5px;background:linear-gradient(180deg,#f7f8fd,#f0f2fb);box-shadow:0 0 0 1px rgba(200,205,240,.55),0 1px 3px rgba(120,130,200,.2)"></div>
<div class="a" style="left:1225px;top:316px;width:18px;height:40px;background:repeating-linear-gradient(135deg,rgba(190,200,245,.0) 0 3px,rgba(190,200,245,.25) 3px 4px)"></div>
<div class="a" style="left:1220px;top:282px;width:28px;height:29px;border-radius:50%;background:radial-gradient(circle at 50% 30%,#ffffff 0,#f4f5f8 45%,#d9dce6 100%)"></div>
<div class="a" style="left:1221.5px;top:289.5px;width:25px;height:14px;border-radius:7px;background:linear-gradient(180deg,#202448,#141830);box-shadow:inset 1.5px 0 0 #8a4fd8,inset -1.5px 0 0 #3aa0e8,inset 0 -1px 0 #5a6ae0"></div>
<div class="a" style="left:1227px;top:294.5px;width:4px;height:4.5px;border-radius:50%;background:#f4fbff;box-shadow:0 0 2px 1px rgba(140,210,255,.8)"></div>
<div class="a" style="left:1237px;top:294.5px;width:4px;height:4.5px;border-radius:50%;background:#f4fbff;box-shadow:0 0 2px 1px rgba(140,210,255,.8)"></div>
<svg class="a" style="left:1229px;top:272px" width="10" height="10" viewBox="0 0 10 10"><circle cx="5" cy="4" r="2.3" stroke="#c9cbd3" stroke-width="1" fill="none"/><path d="M5 6.3 V9.5 M2 3 L0.8 2 M8 3 L9.2 2" stroke="#c9cbd3" stroke-width=".9"/></svg>
<div class="t" style="left:1227.5px;top:318px;font-size:12px;font-weight:bold;color:#333;line-height:14.9px;width:13px;white-space:normal;text-align:center">职<br>教<br>一<br>问</div>
<svg class="a" style="left:1219px;top:371px" width="30" height="20" viewBox="0 0 30 20"><defs><clipPath id="wc"><path d="M0 0 H30 V4.5 A15 15 0 0 1 0 4.5 Z"/></clipPath></defs><g clip-path="url(#wc)"><path d="M0 6 Q7.5 1 15 5 T30 4 V20 H0 Z" fill="rgba(150,180,250,.45)"/><path d="M0 10 Q8 5 15 9 T30 8 V20 H0 Z" fill="rgba(130,165,250,.5)"/><path d="M0 14 Q8 10 15 13 T30 12 V20 H0 Z" fill="rgba(190,210,255,.6)"/></g></svg>
<div class="a" style="left:1215px;top:411px;width:35px;height:124px;border-radius:17.5px;background:#fff;box-shadow:0 1px 6px rgba(0,0,0,.10)"></div>
<svg class="a" style="left:1222px;top:427px" width="21" height="20" viewBox="0 0 21 20"><path d="M2.8 10.5 A7.7 7.7 0 0 1 18.2 10.5" stroke="#4a6ee6" stroke-width="1.8" fill="none"/><rect x="0.8" y="9" width="3.6" height="6.5" rx="1.6" fill="#4a6ee6"/><rect x="16.6" y="9" width="3.6" height="6.5" rx="1.6" fill="#4a6ee6"/><path d="M5.2 10.5 C5.2 5.5, 15.8 5.5, 15.8 10.5 C15.8 15.2, 13 17, 10.5 17 C8 17, 5.2 15.2, 5.2 10.5 Z" fill="#4a6ee6"/><path d="M6.8 11.2 C8.5 10.8, 11 9.8, 12.3 8.6 C13.2 9.8, 14.2 10.5, 14.3 11.2 C14.1 14.2, 12.5 15.6, 10.5 15.6 C8.5 15.6, 6.9 14.2, 6.8 11.2 Z" fill="#fff"/><path d="M9 13.2 Q10.5 14.2 12 13.2" stroke="#4a6ee6" stroke-width=".8" fill="none"/><path d="M17.5 15.2 Q16.5 18.3 11.5 18.3" stroke="#4a6ee6" stroke-width="1.2" fill="none"/><circle cx="10.8" cy="18.3" r="1.3" fill="#4a6ee6"/></svg>
<svg class="a" style="left:1222px;top:464px" width="21" height="17" viewBox="0 0 21 17"><path d="M4.8 16.5 A4.6 4.6 0 0 1 4 7.4 A6.5 6.5 0 0 1 16.6 6.6 A5 5 0 0 1 16.4 16.5 Z" fill="#4a6ee6"/><path d="M10.5 6 V11.5" stroke="#fff" stroke-width="2.2"/><path d="M6.6 10.3 L10.5 14.5 L14.4 10.3 Z" fill="#fff"/></svg>
<svg class="a" style="left:1221.5px;top:497px" width="21" height="21" viewBox="0 0 21 21"><circle cx="10.5" cy="10.5" r="10.2" fill="#4a6ee6"/><path d="M7.2 8.2 Q7.2 4.8 10.5 4.8 Q13.8 4.8 13.8 7.8 Q13.8 9.6 12 10.5 Q10.7 11.2 10.7 13" stroke="#fff" stroke-width="2.3" fill="none"/><circle cx="10.7" cy="16" r="1.45" fill="#fff"/></svg>
<svg class="a" style="left:1225.5px;top:540px" width="14" height="14" viewBox="0 0 14 14"><circle cx="7" cy="7" r="6.2" stroke="#8a8a8a" stroke-width="1" fill="none"/><path d="M4.9 4.9 L9.1 9.1 M9.1 4.9 L4.9 9.1" stroke="#777" stroke-width="1.2"/></svg>
<div class="a" style="left:0;top:595px;width:1260px;height:7px;background:#fff"></div>
<div class="a" style="left:394px;top:595px;width:866px;height:7px;background:#c1c1c1;border-radius:3.5px"></div>
<div class="a" style="left:1260px;top:0;width:7px;height:602px;background:#fff"></div>
<div class="a" style="left:1260px;top:0;width:7px;height:589px;background:#c1c1c1;border-radius:0 0 3.5px 3.5px"></div>
</body></html>
